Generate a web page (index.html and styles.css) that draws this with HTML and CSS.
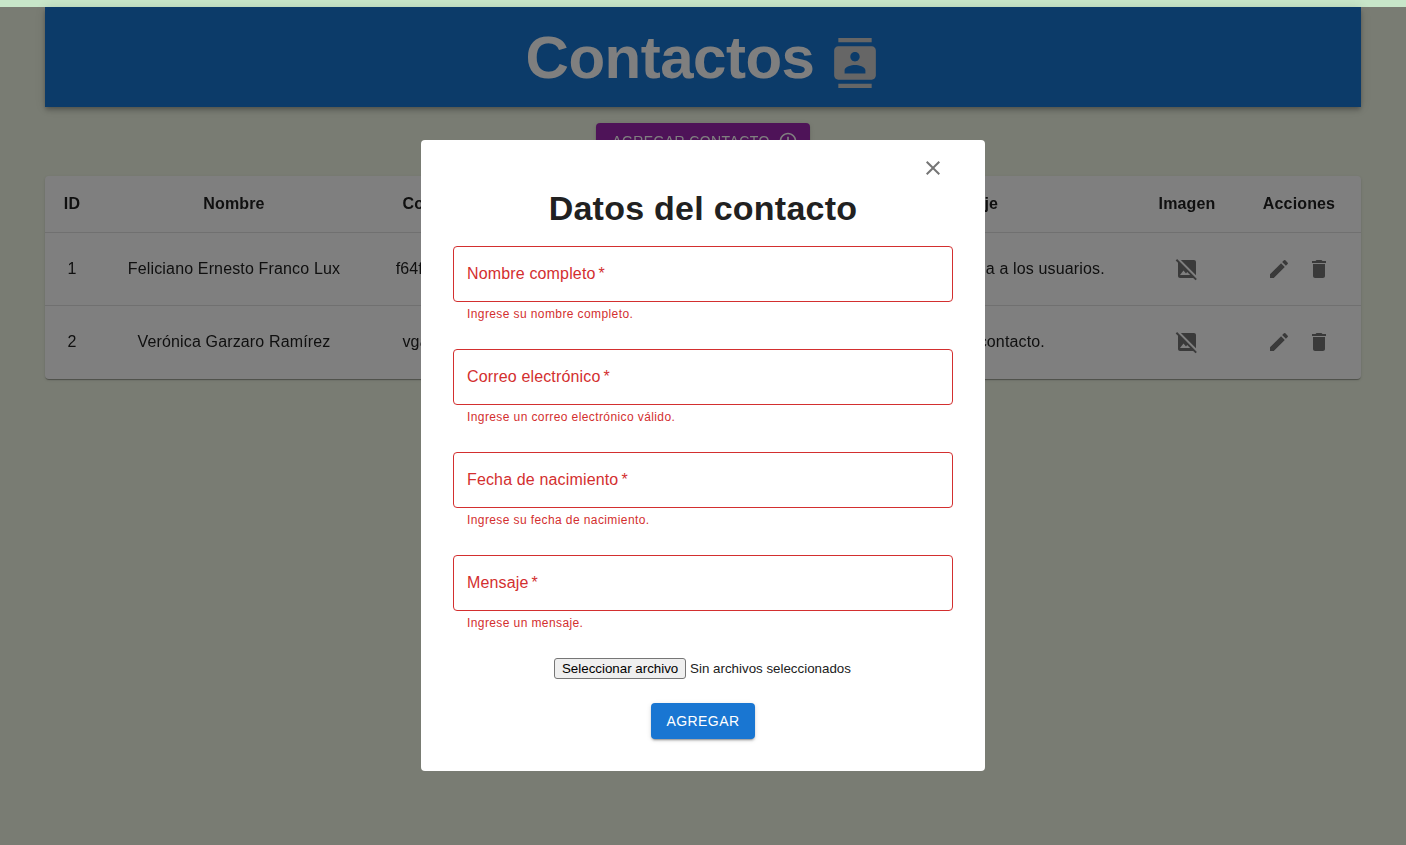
FILE: index.html
```html
<!DOCTYPE html>
<html>
<head>
  <title>Contactos</title>
  <link rel="stylesheet" href="styles.css">
</head>
<body>
  <div class="top-strip"></div>

  <div class="container">
    <header class="app-header">
      <h1>Contactos</h1>
      <svg class="header-icon" viewBox="0 0 24 24"><path d="M20 0H4v2h16V0zM4 24h16v-2H4v2zM20 4H4c-1.1 0-2 .9-2 2v12c0 1.1.9 2 2 2h16c1.1 0 2-.9 2-2V6c0-1.1-.9-2-2-2zm-8 2.75c1.24 0 2.25 1.01 2.25 2.25s-1.01 2.25-2.25 2.25S9.75 10.24 9.75 9 10.76 6.75 12 6.75zM17 17H7v-1.5c0-1.67 3.33-2.5 5-2.5s5 .83 5 2.5V17z"/></svg>
    </header>

    <div class="add-row">
      <button class="btn btn-add" type="button">
        Agregar contacto
        <svg class="btn-icon" viewBox="0 0 24 24"><path d="M13 7h-2v4H7v2h4v4h2v-4h4v-2h-4V7zm-1-5C6.48 2 2 6.48 2 12s4.48 10 10 10 10-4.48 10-10S17.52 2 12 2zm0 18c-4.41 0-8-3.59-8-8s3.59-8 8-8 8 3.59 8 8-3.59 8-8 8z"/></svg>
      </button>
    </div>

    <div class="table-paper">
      <table id="contact-table">
        <colgroup>
          <col class="col-id">
          <col class="col-name">
          <col class="col-mail">
          <col class="col-date">
          <col class="col-msg">
          <col class="col-img">
          <col class="col-actions">
        </colgroup>
        <thead>
          <tr>
            <th>ID</th>
            <th>Nombre</th>
            <th>Correo electrónico</th>
            <th>Fecha</th>
            <th>Mensaje</th>
            <th>Imagen</th>
            <th>Acciones</th>
          </tr>
        </thead>
        <tbody>
          <tr>
            <td>1</td>
            <td>Feliciano Ernesto Franco Lux</td>
            <td>f64franco@gmail.com</td>
            <td>1964-03-12</td>
            <td>Mensaje de bienvenida a los usuarios.</td>
            <td><svg class="icon" viewBox="0 0 24 24"><path d="M21.9 21.9 2.1 2.1.69 3.51 3 5.83V19c0 1.1.9 2 2 2h13.17l2.31 2.31 1.42-1.41zM5 18l3.5-4.5 2.5 3.01L12.17 15l3 3H5zm16 .17L5.83 3H19c1.1 0 2 .9 2 2v13.17z"/></svg></td>
            <td class="actions">
              <svg class="icon" viewBox="0 0 24 24"><path d="M3 17.25V21h3.75L17.81 9.94l-3.75-3.75L3 17.25zM20.71 7.04c.39-.39.39-1.02 0-1.41l-2.34-2.34a.9959.9959 0 0 0-1.41 0l-1.83 1.83 3.75 3.75 1.83-1.83z"/></svg>
              <svg class="icon" viewBox="0 0 24 24"><path d="M6 19c0 1.1.9 2 2 2h8c1.1 0 2-.9 2-2V7H6v12zM19 4h-3.5l-1-1h-5l-1 1H5v2h14V4z"/></svg>
            </td>
          </tr>
          <tr>
            <td>2</td>
            <td>Verónica Garzaro Ramírez</td>
            <td>vgarzar@gmail.com</td>
            <td>1990-07-25</td>
            <td>Pruebas del contacto.</td>
            <td><svg class="icon" viewBox="0 0 24 24"><path d="M21.9 21.9 2.1 2.1.69 3.51 3 5.83V19c0 1.1.9 2 2 2h13.17l2.31 2.31 1.42-1.41zM5 18l3.5-4.5 2.5 3.01L12.17 15l3 3H5zm16 .17L5.83 3H19c1.1 0 2 .9 2 2v13.17z"/></svg></td>
            <td class="actions">
              <svg class="icon" viewBox="0 0 24 24"><path d="M3 17.25V21h3.75L17.81 9.94l-3.75-3.75L3 17.25zM20.71 7.04c.39-.39.39-1.02 0-1.41l-2.34-2.34a.9959.9959 0 0 0-1.41 0l-1.83 1.83 3.75 3.75 1.83-1.83z"/></svg>
              <svg class="icon" viewBox="0 0 24 24"><path d="M6 19c0 1.1.9 2 2 2h8c1.1 0 2-.9 2-2V7H6v12zM19 4h-3.5l-1-1h-5l-1 1H5v2h14V4z"/></svg>
            </td>
          </tr>
        </tbody>
      </table>
    </div>
  </div>

  <div class="backdrop">
    <form class="modal" id="contact-form">
      <div class="modal-close">
        <svg class="close-icon" viewBox="0 0 24 24"><path d="M19 6.41 17.59 5 12 10.59 6.41 5 5 6.41 10.59 12 5 17.59 6.41 19 12 13.41 17.59 19 19 17.59 13.41 12z"/></svg>
      </div>
      <h2>Datos del contacto</h2>

      <div class="field">
        <div class="field-box">Nombre completo<span class="req">*</span></div>
        <p class="field-help">Ingrese su nombre completo.</p>
      </div>
      <div class="field">
        <div class="field-box">Correo electrónico<span class="req">*</span></div>
        <p class="field-help">Ingrese un correo electrónico válido.</p>
      </div>
      <div class="field">
        <div class="field-box">Fecha de nacimiento<span class="req">*</span></div>
        <p class="field-help">Ingrese su fecha de nacimiento.</p>
      </div>
      <div class="field">
        <div class="field-box">Mensaje<span class="req">*</span></div>
        <p class="field-help">Ingrese un mensaje.</p>
      </div>

      <div class="file-row">
        <span class="file-btn">Seleccionar archivo</span>
        <span class="file-text">Sin archivos seleccionados</span>
      </div>

      <button class="btn btn-submit" type="submit">Agregar</button>
    </form>
  </div>
</body>
</html>
```

FILE: styles.css
```css
html, body {
  height: 100%;
}

body {
  margin: 0;
  background-color: #f2f8e6;
  font-family: "Liberation Sans", Arial, sans-serif;
  color: #212121;
  overflow: hidden;
}

.top-strip {
  height: 7px;
  background-color: #c8e6c9;
}

.container {
  padding: 0 45px;
  will-change: opacity;
}

.app-header {
  display: flex;
  align-items: center;
  justify-content: center;
  gap: 16px;
  height: 100px;
  background-color: #1976d2;
  box-shadow: 0 2px 4px -1px rgba(0,0,0,.2), 0 4px 5px 0 rgba(0,0,0,.14), 0 1px 10px 0 rgba(0,0,0,.12);
}

.app-header h1 {
  margin: 2px 0 0;
  font-size: 60px;
  font-weight: bold;
  line-height: 72px;
  letter-spacing: -0.5px;
  color: #fff;
}

.header-icon {
  width: 50px;
  height: 50px;
  margin-top: 12px;
  fill: #cdcdcd;
}

.add-row {
  display: flex;
  justify-content: center;
  padding: 16px 0 17px;
}

.btn {
  display: inline-flex;
  align-items: center;
  justify-content: center;
  height: 36px;
  border: none;
  border-radius: 4px;
  font-family: "Liberation Sans", Arial, sans-serif;
  font-size: 14px;
  font-weight: 400;
  letter-spacing: 0.4px;
  text-transform: uppercase;
  color: #fff;
  box-shadow: 0 3px 1px -2px rgba(0,0,0,.2), 0 2px 2px 0 rgba(0,0,0,.14), 0 1px 5px 0 rgba(0,0,0,.12);
}

.btn-add {
  gap: 8px;
  padding: 0 12px 0 16px;
  background-color: #9c27b0;
}

.btn-icon {
  width: 20px;
  height: 20px;
  fill: #fff;
}

.table-paper {
  background-color: #fff;
  border-radius: 4px;
  overflow: hidden;
  box-shadow: 0 2px 1px -1px rgba(0,0,0,.2), 0 1px 1px 0 rgba(0,0,0,.14), 0 1px 3px 0 rgba(0,0,0,.12);
}

table {
  width: 100%;
  table-layout: fixed;
  border-collapse: collapse;
}

.col-id { width: 54px; }
.col-name { width: 270px; }
.col-mail { width: 212px; }
.col-date { width: 216px; }
.col-msg { width: 338px; }
.col-img { width: 104px; }

th, td {
  padding: 0 16px;
  text-align: center;
  font-size: 16px;
  letter-spacing: 0.15px;
  color: #212121;
  border-bottom: 1px solid #e0e0e0;
  white-space: nowrap;
}

th:last-child, td:last-child {
  padding-right: 18px;
}

th {
  height: 55px;
  padding-bottom: 1px;
  font-weight: bold;
}

td {
  height: 72px;
}

tbody tr:last-child td {
  padding-bottom: 1px;
  border-bottom: none;
}

.icon {
  display: inline-block;
  width: 24px;
  height: 24px;
  fill: rgba(0,0,0,.54);
  vertical-align: middle;
}

.actions .icon + .icon {
  margin-left: 12px;
}

.backdrop {
  position: fixed;
  top: 7px;
  left: 0;
  right: 0;
  bottom: 0;
  display: flex;
  align-items: flex-start;
  justify-content: center;
  padding-top: 133px;
  background-color: rgba(0,0,0,.5);
}

.modal {
  display: flex;
  flex-direction: column;
  align-items: center;
  box-sizing: border-box;
  width: 564px;
  height: 631px;
  padding: 16px 32px 0;
  background-color: #fff;
  border-radius: 4px;
  will-change: opacity;
}

.modal-close {
  align-self: flex-end;
  display: flex;
  height: 24px;
}

.close-icon {
  width: 24px;
  height: 24px;
  fill: rgba(0,0,0,.54);
  margin-right: 8px;
}

.modal h2 {
  margin: 7px 0 0;
  font-size: 34px;
  font-weight: bold;
  line-height: 42px;
  letter-spacing: 0.25px;
  color: #212121;
}

.field {
  width: 100%;
  height: 103px;
}

.modal h2 + .field {
  margin-top: 17px;
}

.field-box {
  display: flex;
  align-items: center;
  box-sizing: border-box;
  height: 56px;
  padding: 0 13px;
  border: 1px solid #d32f2f;
  border-radius: 4px;
  font-size: 16px;
  letter-spacing: 0.15px;
  color: #d32f2f;
}

.req {
  margin-left: 3px;
}

.field-help {
  margin: 5px 14px 0;
  font-size: 12px;
  line-height: 14px;
  letter-spacing: 0.4px;
  color: #d32f2f;
}

.file-row {
  display: flex;
  align-items: center;
  justify-content: center;
  gap: 4px;
  height: 21px;
  padding-right: 1px;
  font-size: 13.3333px;
  color: #212121;
}

.file-btn {
  box-sizing: border-box;
  width: 132px;
  height: 21px;
  text-align: center;
  line-height: 19px;
  background-color: #efefef;
  border: 1px solid #767676;
  border-radius: 3px;
  color: #000;
}

.btn-submit {
  width: 104px;
  margin-top: 24px;
  padding: 0;
  background-color: #1976d2;
}
```
